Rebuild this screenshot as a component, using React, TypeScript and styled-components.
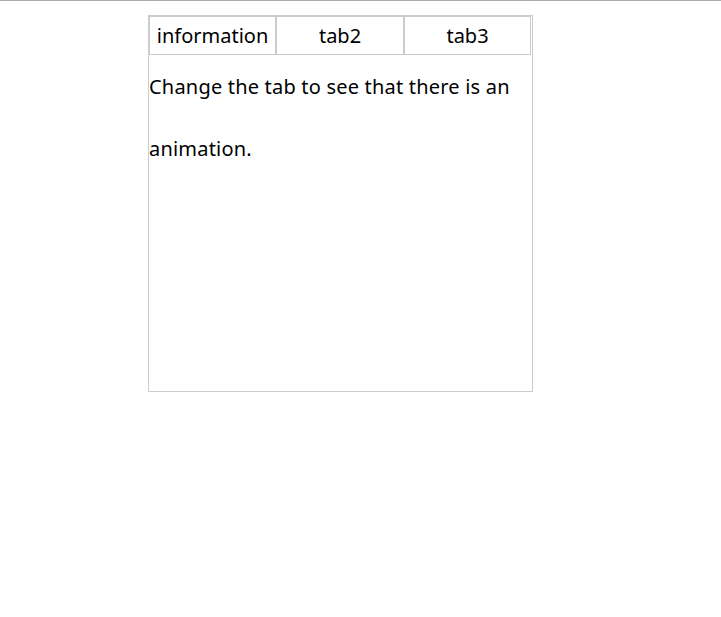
import * as React from 'react'
import styled, { createGlobalStyle } from 'styled-components'

const GlobalStyle = createGlobalStyle`
  html, body {
    margin: 0;
    padding: 0;
    background: #fff;
  }
  body {
    font-family: 'Noto Sans', 'Open Sans', sans-serif;
    color: #000;
    border-top: 1px solid #aaa;
  }
`

const Page = styled.div`
  padding: 14px 0 0 148px;
`

const TabBox = styled.div`
  width: 383px;
  height: 375px;
  border: 1px solid #ccc;
`

const TabBar = styled.div`
  display: grid;
  grid-template-columns: 127px 128px 127px;
`

const Tab = styled.div<{ active?: boolean }>`
  height: 37px;
  border: 1px solid #ccc;
  display: flex;
  align-items: center;
  justify-content: center;
  font-size: 20px;
  cursor: pointer;
  background: #fff;
  color: ${p => (p.active ? '#000' : '#000')};
`

const Panel = styled.p`
  margin: 0;
  padding-top: 1px;
  font-size: 20px;
  line-height: 62px;
  letter-spacing: 0.2px;
`

const tabs = ['information', 'tab2', 'tab3']

export default function App() {
  const [active, setActive] = React.useState(0)
  return (
    <Page>
      <GlobalStyle />
      <TabBox>
        <TabBar>
          {tabs.map((t, i) => (
            <Tab key={t} active={active === i} onClick={() => setActive(i)}>
              {t}
            </Tab>
          ))}
        </TabBar>
        <Panel>Change the tab to see that there is an animation.</Panel>
      </TabBox>
    </Page>
  )
}
